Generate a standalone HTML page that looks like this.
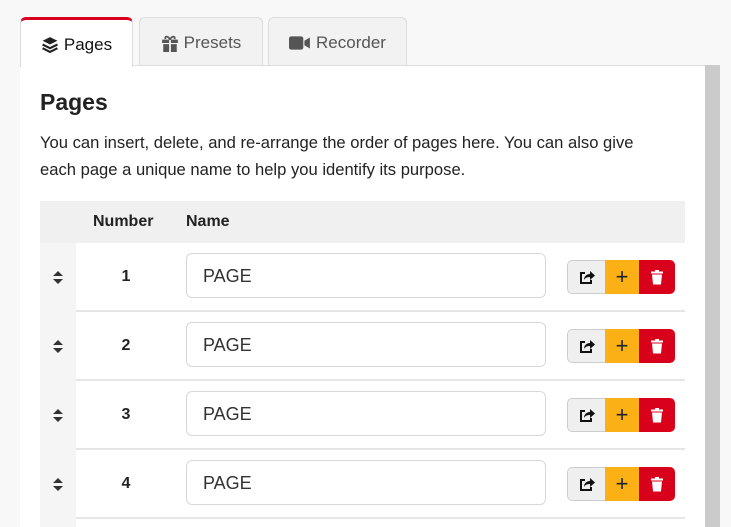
<!DOCTYPE html><html><head><style>
html,body{margin:0;width:731px;height:527px;overflow:hidden}
body{background:#f8f8f8;font-family:"Liberation Sans","DejaVu Sans",sans-serif;color:#222;position:relative}
.a{position:absolute}
.tab{position:absolute;top:17px;height:48px;background:#f2f2f2;border:1px solid #ddd;border-bottom:none;border-radius:6px 6px 0 0;font-size:17px;color:#555;display:flex;align-items:center;justify-content:center;gap:5px;box-sizing:border-box;padding-top:2px}
.row{position:absolute;left:40px;width:645px;height:67px;border-bottom:2px solid #e6e6e6}
.drag{position:absolute;left:0;top:0;width:36px;height:69px;background:#f5f5f5}
.num{position:absolute;left:36px;width:100px;text-align:center;top:25px;font-weight:bold;font-size:16px}
.inp{position:absolute;left:146px;top:10px;width:360px;height:45px;border:1px solid #d8d8d8;border-radius:6px;box-sizing:border-box;font-size:18px;padding:12px 16px;color:#333;background:#fff}
.btns{position:absolute;left:527px;top:17px;height:34px;width:108px;display:flex;border-radius:5px;overflow:hidden}
.b1{width:38px;background:#efefef;border:1px solid #ccc;border-right:none;border-radius:5px 0 0 5px;box-sizing:border-box;display:flex;align-items:center;justify-content:center}
.b2{width:34px;background:#fbb116;display:flex;align-items:center;justify-content:center;font-size:22px}
.b3{width:36px;background:#d9001b;display:flex;align-items:center;justify-content:center}
</style></head><body>
<div class="a" style="left:20px;top:65px;width:685px;height:462px;background:#fff;border-top:1px solid #ddd;box-sizing:border-box"></div>
<div class="a" style="left:705px;top:65px;width:15px;height:462px;background:#cbcbcb"></div>
<div class="tab" style="left:20px;width:113px;background:#fff;border-top:3px solid #d9001b;color:#111;height:50px">
<svg width="18" height="17" viewBox="0 0 16 16"><path d="M8 1L15 4.5 8 8 1 4.5Z" fill="#222"/><path d="M1 8l7 3.5L15 8M1 11.5L8 15l7-3.5" stroke="#222" stroke-width="2" fill="none"/></svg>Pages</div>
<div class="tab" style="left:139px;width:124px"><svg width="18" height="18" viewBox="0 0 16 16"><rect x="1" y="5" width="14" height="3" fill="#555"/><rect x="2" y="9" width="12" height="7" fill="#555"/><rect x="7.2" y="5" width="1.6" height="11" fill="#f2f2f2"/><path d="M8 5C6 1 3 2 4 4.5M8 5c2-4 5-3 4-.5" stroke="#555" stroke-width="1.6" fill="none"/></svg>Presets</div>
<div class="tab" style="left:268px;width:139px"><svg width="22" height="16" viewBox="0 0 20 14"><rect x="0" y="1" width="13" height="12" rx="2" fill="#555"/><path d="M14 5l5-3v10l-5-3z" fill="#555"/></svg>Recorder</div>
<div class="a" style="left:40px;top:89px;font-size:23px;font-weight:bold">Pages</div>
<div class="a" style="left:40px;top:129px;width:660px;font-size:16.6px;line-height:27px;color:#222">You can insert, delete, and re-arrange the order of pages here. You can also give<br>each page a unique name to help you identify its purpose.</div>
<div class="a" style="left:40px;top:201px;width:645px;height:42px;background:#f0f0f0;font-weight:bold;font-size:16px">
<span class="a" style="left:53px;top:12px">Number</span><span class="a" style="left:146px;top:12px">Name</span></div>
<div id="rows"></div>
<div class="a" style="left:40px;top:519px;width:36px;height:8px;background:#f5f5f5"></div>
<script>
var h='';[243,312,381,450].forEach(function(t,i){h+='<div class="row" style="top:'+t+'px"><div class="drag"><svg class="a" style="left:12px;top:27px" width="12" height="15" viewBox="0 0 12 15"><path d="M1 6L6 1l5 5zM1 9l5 5 5-5z" fill="#333"/></svg></div><div class="num">'+(i+1)+'</div><div class="inp">PAGE</div><div class="btns"><div class="b1"><svg width="16" height="15" viewBox="0 0 16 15"><path d="M6 3H2v10h10v-3" stroke="#111" stroke-width="2" fill="none"/><path d="M5 10c0-4 3-6 6-6V1l5 4.5-5 4.5V7C8 7 6 8 5 10z" fill="#111"/></svg></div><div class="b2">+</div><div class="b3"><svg width="12" height="15" viewBox="0 0 12 15"><rect x="0" y="1.5" width="12" height="2" fill="#fff"/><rect x="4" y="0" width="4" height="2" fill="#fff"/><path d="M1 4.5h10l-1 10H2z" fill="#fff"/></svg></div></div></div>'});
document.getElementById('rows').innerHTML=h;
</script>
</body></html>
